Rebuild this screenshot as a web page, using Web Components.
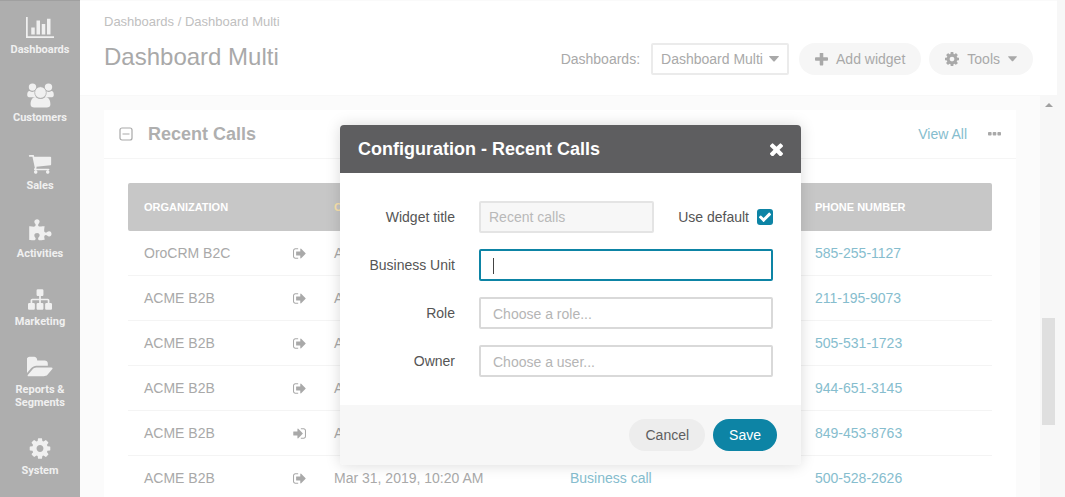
<!DOCTYPE html>
<html lang="en">
<head>
<meta charset="utf-8">
<title>Dashboard Multi</title>
<style>
  html, body { margin: 0; height: 100%; }
  body { font: 14px/20px "Liberation Sans", Arial, sans-serif; color: #a9a9a9; background: #f7f7f7; overflow: hidden; }
</style>
</head>
<body>
<app-shell>
  <app-sidebar slot="nav">
    <nav-item icon="chart">Dashboards</nav-item>
    <nav-item icon="users">Customers</nav-item>
    <nav-item icon="cart">Sales</nav-item>
    <nav-item icon="puzzle">Activities</nav-item>
    <nav-item icon="sitemap">Marketing</nav-item>
    <nav-item icon="folder">Reports &amp; Segments</nav-item>
    <nav-item icon="cog">System</nav-item>
  </app-sidebar>
  <page-header slot="header"></page-header>
  <widget-panel heading="Recent Calls"><calls-table></calls-table></widget-panel>
</app-shell>
<config-dialog heading="Configuration - Recent Calls">
  <form-field label="Widget title" value="Recent calls" default-option></form-field>
  <form-field label="Business Unit" active></form-field>
  <form-field label="Role" placeholder="Choose a role..."></form-field>
  <form-field label="Owner" placeholder="Choose a user..."></form-field>
</config-dialog>

<script>
const OUT_BOX = 'M704 1440q0 4 1 20t.5 26.5-3 23.5-10 19.5-20.5 6.5h-320q-119 0-203.5-84.5t-84.5-203.5v-704q0-119 84.5-203.5t203.5-84.5h320q13 0 22.5 9.5t9.5 22.5q0 4 1 20t.5 26.5-3 23.5-10 19.5-20.5 6.5h-320q-66 0-113 47t-47 113v704q0 66 47 113t113 47h312l11.5 1 11.5 3 8 5.5 7 9 2 13.5z';
const ARROW = 'M1632 896q0 26-19 45l-544 544q-19 19-45 19t-45-19-19-45v-288h-448q-26 0-45-19t-19-45v-384q0-26 19-45t45-19h448v-288q0-26 19-45t45-19 45 19l544 544q19 19 19 45z';
const p = d => `<path d="${d}"/>`;
const ICONS = {
  chart: ['0 0 2048 1792', p('M640 896v512h-256v-512h256zm384-512v1024h-256v-1024h256zm1024 1152v128h-2048v-1536h128v1408h1920zm-640-896v768h-256v-768h256zm384-384v1152h-256v-1152h256z')],
  users: ['0 0 27 24', '<circle cx="5.5" cy="3.6" r="3.7"/><circle cx="21.5" cy="3.6" r="3.7"/><path d="M.2 11.5Q.2 7.5 2.6 7.5Q5.5 9.2 8.3 7.6L8.8 13.8H3.2Q.2 13.8.2 11.5zM26.8 11.5Q26.8 7.5 24.4 7.5Q21.5 9.2 18.7 7.6L18.2 13.8H23.8Q26.8 13.8 26.8 11.5z"/><path d="M8.4 13.6Q13.5 17.4 18.6 13.6C22 13.6 23.4 17.6 23.4 21Q23.4 24 19.6 24H7.4Q3.6 24 3.6 21C3.6 17.6 5 13.6 8.4 13.6z"/><circle cx="13.5" cy="9" r="5.8" stroke="#aeaeae" stroke-width=".8"/>'],
  cart: ['0 0 1792 1792', p('M704 1536q0 52-38 90t-90 38-90-38-38-90 38-90 90-38 90 38 38 90zm896 0q0 52-38 90t-90 38-90-38-38-90 38-90 90-38 90 38 38 90zm128-1088v512q0 24-16.5 42.5t-40.5 21.5l-1044 122q13 60 13 70 0 16-24 64h920q26 0 45 19t19 45-19 45-45 19h-1024q-26 0-45-19t-19-45q0-11 8-31.5t16-36 21.5-40 15.5-29.5l-177-823h-204q-26 0-45-19t-19-45 19-45 45-19h256q16 0 28.5 6.5t19.5 15.5 13 24.5 8 26 5.5 29.5 4.5 26h1201q26 0 45 19t19 45z')],
  puzzle: ['0 0 1792 1792', p('M1755 1083q0 81-44.5 135t-123.5 54q-41 0-77.5-17.5t-59-38-56.5-38-71-17.5q-110 0-110 124 0 39 16 115t15 115v5q-22 0-33 1-34 3-97.5 11.5t-115.5 13.5-98 5q-61 0-103-26.5t-42-83.5q0-37 17.5-71t38-56.5 38-59 17.5-77.5q0-79-54-123.5t-135-44.5q-84 0-143 45.5t-59 127.5q0 43 15 83t33.5 64.5 33.5 53 15 50.5q0 45-46 89-37 35-117 35-95 0-245-24-9-2-27.5-4t-27.5-4l-13-2q-1 0-3-1-2 0-2-1v-1024q2 1 17.5 3.5t34 5 21.5 3.5q150 24 245 24 80 0 117-35 46-44 46-89 0-22-15-50.5t-33.5-53-33.5-64.5-15-83q0-82 59-127.5t144-45.5q80 0 134 44.5t54 123.5q0 41-17.5 77.5t-38 59-38 56.5-17.5 71q0 57 42 83.5t103 26.5q64 0 180-15t163-17v2q-1 2-3.5 17.5t-5 34-3.5 21.5q-24 150-24 245 0 80 35 117 44 46 89 46 22 0 50.5-15t53-33.5 64.5-33.5 83-15q82 0 127.5 59t45.5 143z')],
  sitemap: ['0 0 1792 1792', p('M1792 1248v320q0 40-28 68t-68 28h-320q-40 0-68-28t-28-68v-320q0-40 28-68t68-28h96v-192h-512v192h96q40 0 68 28t28 68v320q0 40-28 68t-68 28h-320q-40 0-68-28t-28-68v-320q0-40 28-68t68-28h96v-192h-512v192h96q40 0 68 28t28 68v320q0 40-28 68t-68 28h-320q-40 0-68-28t-28-68v-320q0-40 28-68t68-28h96v-192q0-52 38-90t90-38h512v-192h-96q-40 0-68-28t-28-68v-320q0-40 28-68t68-28h320q40 0 68 28t28 68v320q0 40-28 68t-68 28h-96v192h512q52 0 90 38t38 90v192h96q40 0 68 28t28 68z')],
  folder: ['-32 0 1879 1792', p('M1815 952q0 31-31 66l-336 396q-43 51-120.5 86.5t-143.5 35.5h-1088q-34 0-60.5-13t-26.5-43q0-31 31-66l336-396q43-51 120.5-86.5t143.5-35.5h1088q34 0 60.5 13t26.5 43zm-343-344v160h-832q-94 0-197 47.5t-164 119.5l-337 396-5 6q0-4-.5-12.5t-.5-12.5v-960q0-92 66-158t158-66h320q92 0 158 66t66 158v32h544q92 0 158 66t66 158z')],
  cog: ['0 0 1792 1792', p('M1152 896q0-106-75-181t-181-75-181 75-75 181 75 181 181 75 181-75 75-181zm512-109v222q0 12-8 23t-20 13l-185 28q-19 54-39 91 35 50 107 138 10 12 10 25t-9 23q-27 37-99 108t-94 71q-12 0-26-9l-138-108q-44 23-91 38-16 136-29 186-7 28-36 28h-222q-14 0-24.5-8.5t-11.5-21.5l-28-184q-49-16-90-37l-141 107q-10 9-25 9-14 0-25-11-126-114-165-168-7-10-7-23 0-12 8-23 15-21 51-66.5t54-70.5q-27-50-41-99l-183-27q-13-2-21-12.5t-8-23.5v-222q0-12 8-23t19-13l186-28q14-46 39-92-40-57-107-138-10-12-10-24 0-10 9-23 26-36 98.5-107.5t94.5-71.5q13 0 26 10l138 107q44-23 91-38 16-136 29-186 7-28 36-28h222q14 0 24.5 8.5t11.5 21.5l28 184q49 16 90 37l142-107q9-9 24-9 13 0 25 10 129 119 165 170 7 8 7 22 0 12-8 23-15 21-51 66.5t-54 70.5q26 50 41 98l183 28q13 2 21 12.5t8 23.5z')],
  plus: ['192 192 1408 1408', p('M1600 736v192q0 40-28 68t-68 28h-416v416q0 40-28 68t-68 28h-192q-40 0-68-28t-28-68v-416h-416q-40 0-68-28t-28-68v-192q0-40 28-68t68-28h416v-416q0-40 28-68t68-28h192q40 0 68 28t28 68v416h416q40 0 68 28t28 68z')],
  gear: ['128 128 1536 1536', ''],
  times: ['302 334 1188 1188', p('M1490 1322q0 40-28 68l-136 136q-28 28-68 28t-68-28l-294-294-294 294q-28 28-68 28t-68-28l-136-136q-28-28-28-68t28-68l294-294-294-294q-28-28-28-68t28-68l136-136q28-28 68-28t68 28l294 294 294-294q28-28 68-28t68 28l136 136q28 28 28 68t-28 68l-294 294 294 294q28 28 28 68z')],
  check: ['0 0 1792 1792', p('M1671 566q0 40-28 68l-724 724-136 136q-28 28-68 28t-68-28l-136-136-362-362q-28-28-28-68t28-68l136-136q28-28 68-28t68 28l294 295 656-657q28-28 68-28t68 28l136 136q28 28 28 68z')],
  caret: ['0 0 10 6', p('M.6 0H9.4Q10.3 0 9.7 .8L5.5 5.4Q5 5.8 4.5 5.4L.3 .8Q-.3 0 .6 0z')],
  minus: ['0 0 14 14', '<rect x="1" y="1" width="12" height="12" rx="2" fill="none" stroke="currentColor" stroke-width="1.2"/><path d="M3.5 6.5h7v1h-7z"/>'],
  dots: ['0 0 13 4', '<rect width="3.6" height="3.6" rx=".8"/><rect x="4.7" width="3.6" height="3.6" rx=".8"/><rect x="9.4" width="3.6" height="3.6" rx=".8"/>'],
  out: ['64 0 1600 1792', p(OUT_BOX) + p(ARROW)],
  in: ['64 0 1600 1792', `<g transform="matrix(-1 0 0 1 1728 0)">${p(OUT_BOX)}</g><g transform="translate(-352 0)">${p(ARROW)}</g>`],
  up: ['0 0 8 4', p('M0 4L4 0L8 4z')]
};
ICONS.gear[1] = ICONS.cog[1];

/* Inline icon; width and height are given in CSS pixels. */
const icon = (name, w, h = w) =>
  `<svg class="i-${name}" width="${w}" height="${h}" viewBox="${ICONS[name][0]}" fill="currentColor" aria-hidden="true">${ICONS[name][1]}</svg>`;

const BASE = '*{box-sizing:border-box} :host{display:block} svg{display:block;flex:none} a{color:inherit;text-decoration:none} button,input,select{font:inherit;color:inherit;margin:0;outline:none}';
function define(tag, css, markup) {
  customElements.define(tag, class extends HTMLElement {
    constructor() { super(); this.attachShadow({ mode: 'open' }); }
    connectedCallback() {
      const t = document.createElement('template');
      t.innerHTML = `<style>${BASE}${css}</style>${markup(this)}`;
      this.shadowRoot.replaceChildren(t.content.cloneNode(true));
    }
  });
}

define('app-shell', `
  :host { display: grid; grid-template-columns: 80px minmax(0, 1fr); height: 100vh; overflow: hidden; }
  .page { display: grid; grid-template-rows: auto minmax(0, 1fr); margin-right: 8px; }
  .body { display: grid; grid-template-columns: minmax(0, 1fr) 17px; min-height: 0; }
  main { background: #fbfbfb; padding: 14px 24px 0; overflow: hidden; border-top: 1px solid #f8f8f8; }
  .bar { display: flex; flex-direction: column; align-items: center; background: #f7f7f7; color: #a0a0a0; padding-top: 8px; }
  .thumb { width: 13px; height: 107px; margin-top: 211px; background: #dfdfdf; }`,
  () => `<slot name="nav"></slot>
  <div class="page"><slot name="header"></slot>
    <div class="body"><main><slot></slot></main>
      <div class="bar">${icon('up', 8, 4)}<div class="thumb"></div></div></div></div>`);

define('app-sidebar', `
  :host { background: #aeaeae; box-shadow: inset 0 1px #a0a0a0; color: #f0f0f0; overflow: hidden; }
  nav { display: flex; flex-direction: column; }`,
  () => `<nav><slot></slot></nav>`);

define('nav-item', `
  a { display: flex; flex-direction: column; align-items: center; gap: 3px; padding: 14px 8px 12px; font: bold 11px/13px Roboto, "Liberation Sans", sans-serif; text-align: center; }
  .pic { height: 26px; display: flex; align-items: center; }`,
  el => {
    const n = el.getAttribute('icon');
    const w = { chart: 28, users: 27, folder: 26 }[n] || 24;
    return `<a href="#"><span class="pic">${icon(n, w, 25)}</span><span><slot></slot></span></a>`;
  });

define('page-header', `
  :host { background: #fff; border-top: 1px solid #fafafa; }
  header { padding: 11px 24px 20px; }
  nav { font-size: 13px; line-height: 20px; color: #c0c0c0; }
  .row { display: flex; align-items: center; justify-content: space-between; margin-top: 11px; }
  h1 { margin: 0 0 4px; font-size: 24px; line-height: 28px; font-weight: normal; color: #a9a9a9; }
  .tools { display: flex; align-items: center; gap: 8px; }
  .pick { display: grid; align-items: center; width: 138px; margin: 0 2px 0 3px; }
  .pick > * { grid-area: 1 / 1; }
  .pick svg { justify-self: end; margin-right: 10px; pointer-events: none; }
  select { appearance: none; width: 100%; height: 32px; padding: 0 24px 0 8px; border: 2px solid #ebebeb; border-radius: 2px; background: #fff; }`,
  () => `<header>
    <nav aria-label="Breadcrumb"><a href="#">Dashboards</a> / <a href="#">Dashboard Multi</a></nav>
    <div class="row"><h1>Dashboard Multi</h1>
      <div class="tools"><label for="board">Dashboards:</label>
        <div class="pick"><select id="board"><option>Dashboard Multi</option></select>${icon('caret', 10, 6)}</div>
        <pill-button icon="plus">Add widget</pill-button>
        <pill-button icon="gear" menu>Tools</pill-button></div></div></header>`);

define('pill-button', `
  button { display: flex; align-items: center; gap: 8px; height: 32px; padding: 0 16px; border: 0; border-radius: 16px; background: #f6f6f6; }
  :host([kind]) button { background: #ededed; color: #5e5e60; }
  :host([kind=primary]) button { background: #0d84a5; color: #fff; }`,
  el => {
    const n = el.getAttribute('icon');
    return `<button type="button">${n ? icon(n, n === 'gear' ? 14 : 13) : ''}<span><slot></slot></span>${el.hasAttribute('menu') ? icon('caret', 9, 6) : ''}</button>`;
  });

define('widget-panel', `
  section { background: #fff; min-height: 400px; }
  header { display: flex; align-items: center; gap: 16px; height: 49px; padding: 0 15px 0 16px; border-bottom: 1px solid #f5f5f5; }
  h2 { flex: 1; margin: 0; font-size: 18px; line-height: 24px; color: #afafaf; }
  a { color: #86bdce; margin-right: 5px; }
  button { border: 0; padding: 0; background: none; }
  .fold { width: 12px; display: flex; justify-content: center; }
  .body { padding: 24px; }`,
  el => `<section><header>
    <button class="fold" aria-label="Collapse">${icon('minus', 14)}</button>
    <h2>${el.getAttribute('heading')}</h2><a href="#">View All</a>
    <button aria-label="More actions">${icon('dots', 13, 4)}</button></header>
    <div class="body"><slot></slot></div></section>`);

const CALLS = [
  ['OroCRM B2C', 'out', 'Apr 2, 2019', '', '585-255-1127'],
  ['ACME B2B', 'out', 'Apr 2, 2019', '', '211-195-9073'],
  ['ACME B2B', 'out', 'Apr 2, 2019', '', '505-531-1723'],
  ['ACME B2B', 'out', 'Apr 1, 2019', '', '944-651-3145'],
  ['ACME B2B', 'in', 'Apr 1, 2019', '', '849-453-8763'],
  ['ACME B2B', 'out', 'Mar 31, 2019, 10:20 AM', 'Business call', '500-528-2626']
];
define('calls-table', `
  table { width: 100%; table-layout: fixed; border-collapse: separate; border-spacing: 0; }
  th { height: 48px; padding: 0 16px; background: #c7c7c7; color: #fff; font-size: 11px; text-align: left; text-transform: uppercase; white-space: nowrap; }
  th:first-child { border-radius: 2px 0 0 2px; } th:last-child { border-radius: 0 2px 2px 0; }
  .sorted { color: #fbe3ac; }
  td { height: 45px; padding: 0 0 0 16px; border-bottom: 1px solid #f4f4f4; white-space: nowrap; }
  a { color: #86bdce; }`,
  () => `<table><colgroup><col style="width:149px"><col style="width:41px"><col style="width:236px"><col style="width:245px"><col></colgroup>
    <thead><tr><th>Organization</th><th></th><th class="sorted">Call date</th><th></th><th>Phone number</th></tr></thead>
    <tbody>${CALLS.map(([org, dir, date, subject, phone]) => `<tr><td>${org}</td><td>${icon(dir, 13, 15)}</td><td>${date}</td><td>${subject ? `<a href="#">${subject}</a>` : ''}</td><td><a href="#">${phone}</a></td></tr>`).join('')}</tbody></table>`);

define('config-dialog', `
  :host { position: absolute; left: 340px; top: 125px; width: 461px; color: #555; border-radius: 4px; box-shadow: 0 0 15px rgba(0,0,0,.15); overflow: hidden; background: #fff; }
  header { display: flex; align-items: center; justify-content: space-between; height: 48px; padding: 0 18px; background: #5e5e60; color: #fff; }
  h2 { margin: 0; font-size: 18px; line-height: 24px; }
  header button { border: 0; padding: 0; background: none; }
  form { display: flex; flex-direction: column; gap: 16px; padding: 28px 28px 28px 0; }
  footer { display: flex; justify-content: flex-end; gap: 8px; padding: 14px 24px; background: #f7f7f7; }`,
  el => `<div role="dialog" aria-label="${el.getAttribute('heading')}">
    <header><h2>${el.getAttribute('heading')}</h2><button aria-label="Close">${icon('times', 13)}</button></header>
    <form><slot></slot></form>
    <footer><pill-button kind="plain">Cancel</pill-button><pill-button kind="primary">Save</pill-button></footer></div>`);

define('form-field', `
  .row { display: grid; grid-template-columns: 115px minmax(0, 1fr); column-gap: 24px; align-items: center; }
  .row > label { text-align: right; }
  .box { display: flex; align-items: center; position: relative; }
  .text { flex: 1; min-width: 0; height: 32px; padding: 2px 12px 0; border: 2px solid #d9d9d9; border-radius: 2px; background: #fff; }
  .text::placeholder { color: #b5b5b5; opacity: 1; }
  .text:disabled { padding: 0 8px; border-color: #e4e4e4; background: #f7f7f7; color: #b9b9b9; }
  :host([active]) .text { border-color: #0d84a5; caret-color: transparent; }
  .caret { position: absolute; left: 14px; top: 9px; width: 1px; height: 16px; background: #444; }
  .opt { display: flex; align-items: center; gap: 8px; margin-left: 24px; }
  .tick { display: grid; place-items: center; color: #fff; }
  .tick > * { grid-area: 1 / 1; }
  .tick svg { pointer-events: none; }
  .tick input { appearance: none; width: 16px; height: 16px; border-radius: 3px; background: #0d84a5; }`,
  el => {
    const a = n => el.getAttribute(n) || '';
    const opt = el.hasAttribute('default-option');
    return `<div class="row"><label for="f">${a('label')}</label><div class="box">
      <input class="text" id="f" type="text" value="${a('value')}" placeholder="${a('placeholder')}"${opt ? ' disabled' : ''}>
      ${el.hasAttribute('active') ? '<span class="caret"></span>' : ''}
      ${opt ? `<div class="opt"><label for="d">Use default</label><span class="tick"><input id="d" type="checkbox" checked>${icon('check', 14)}</span></div>` : ''}
    </div></div>`;
  });
</script>
</body>
</html>
